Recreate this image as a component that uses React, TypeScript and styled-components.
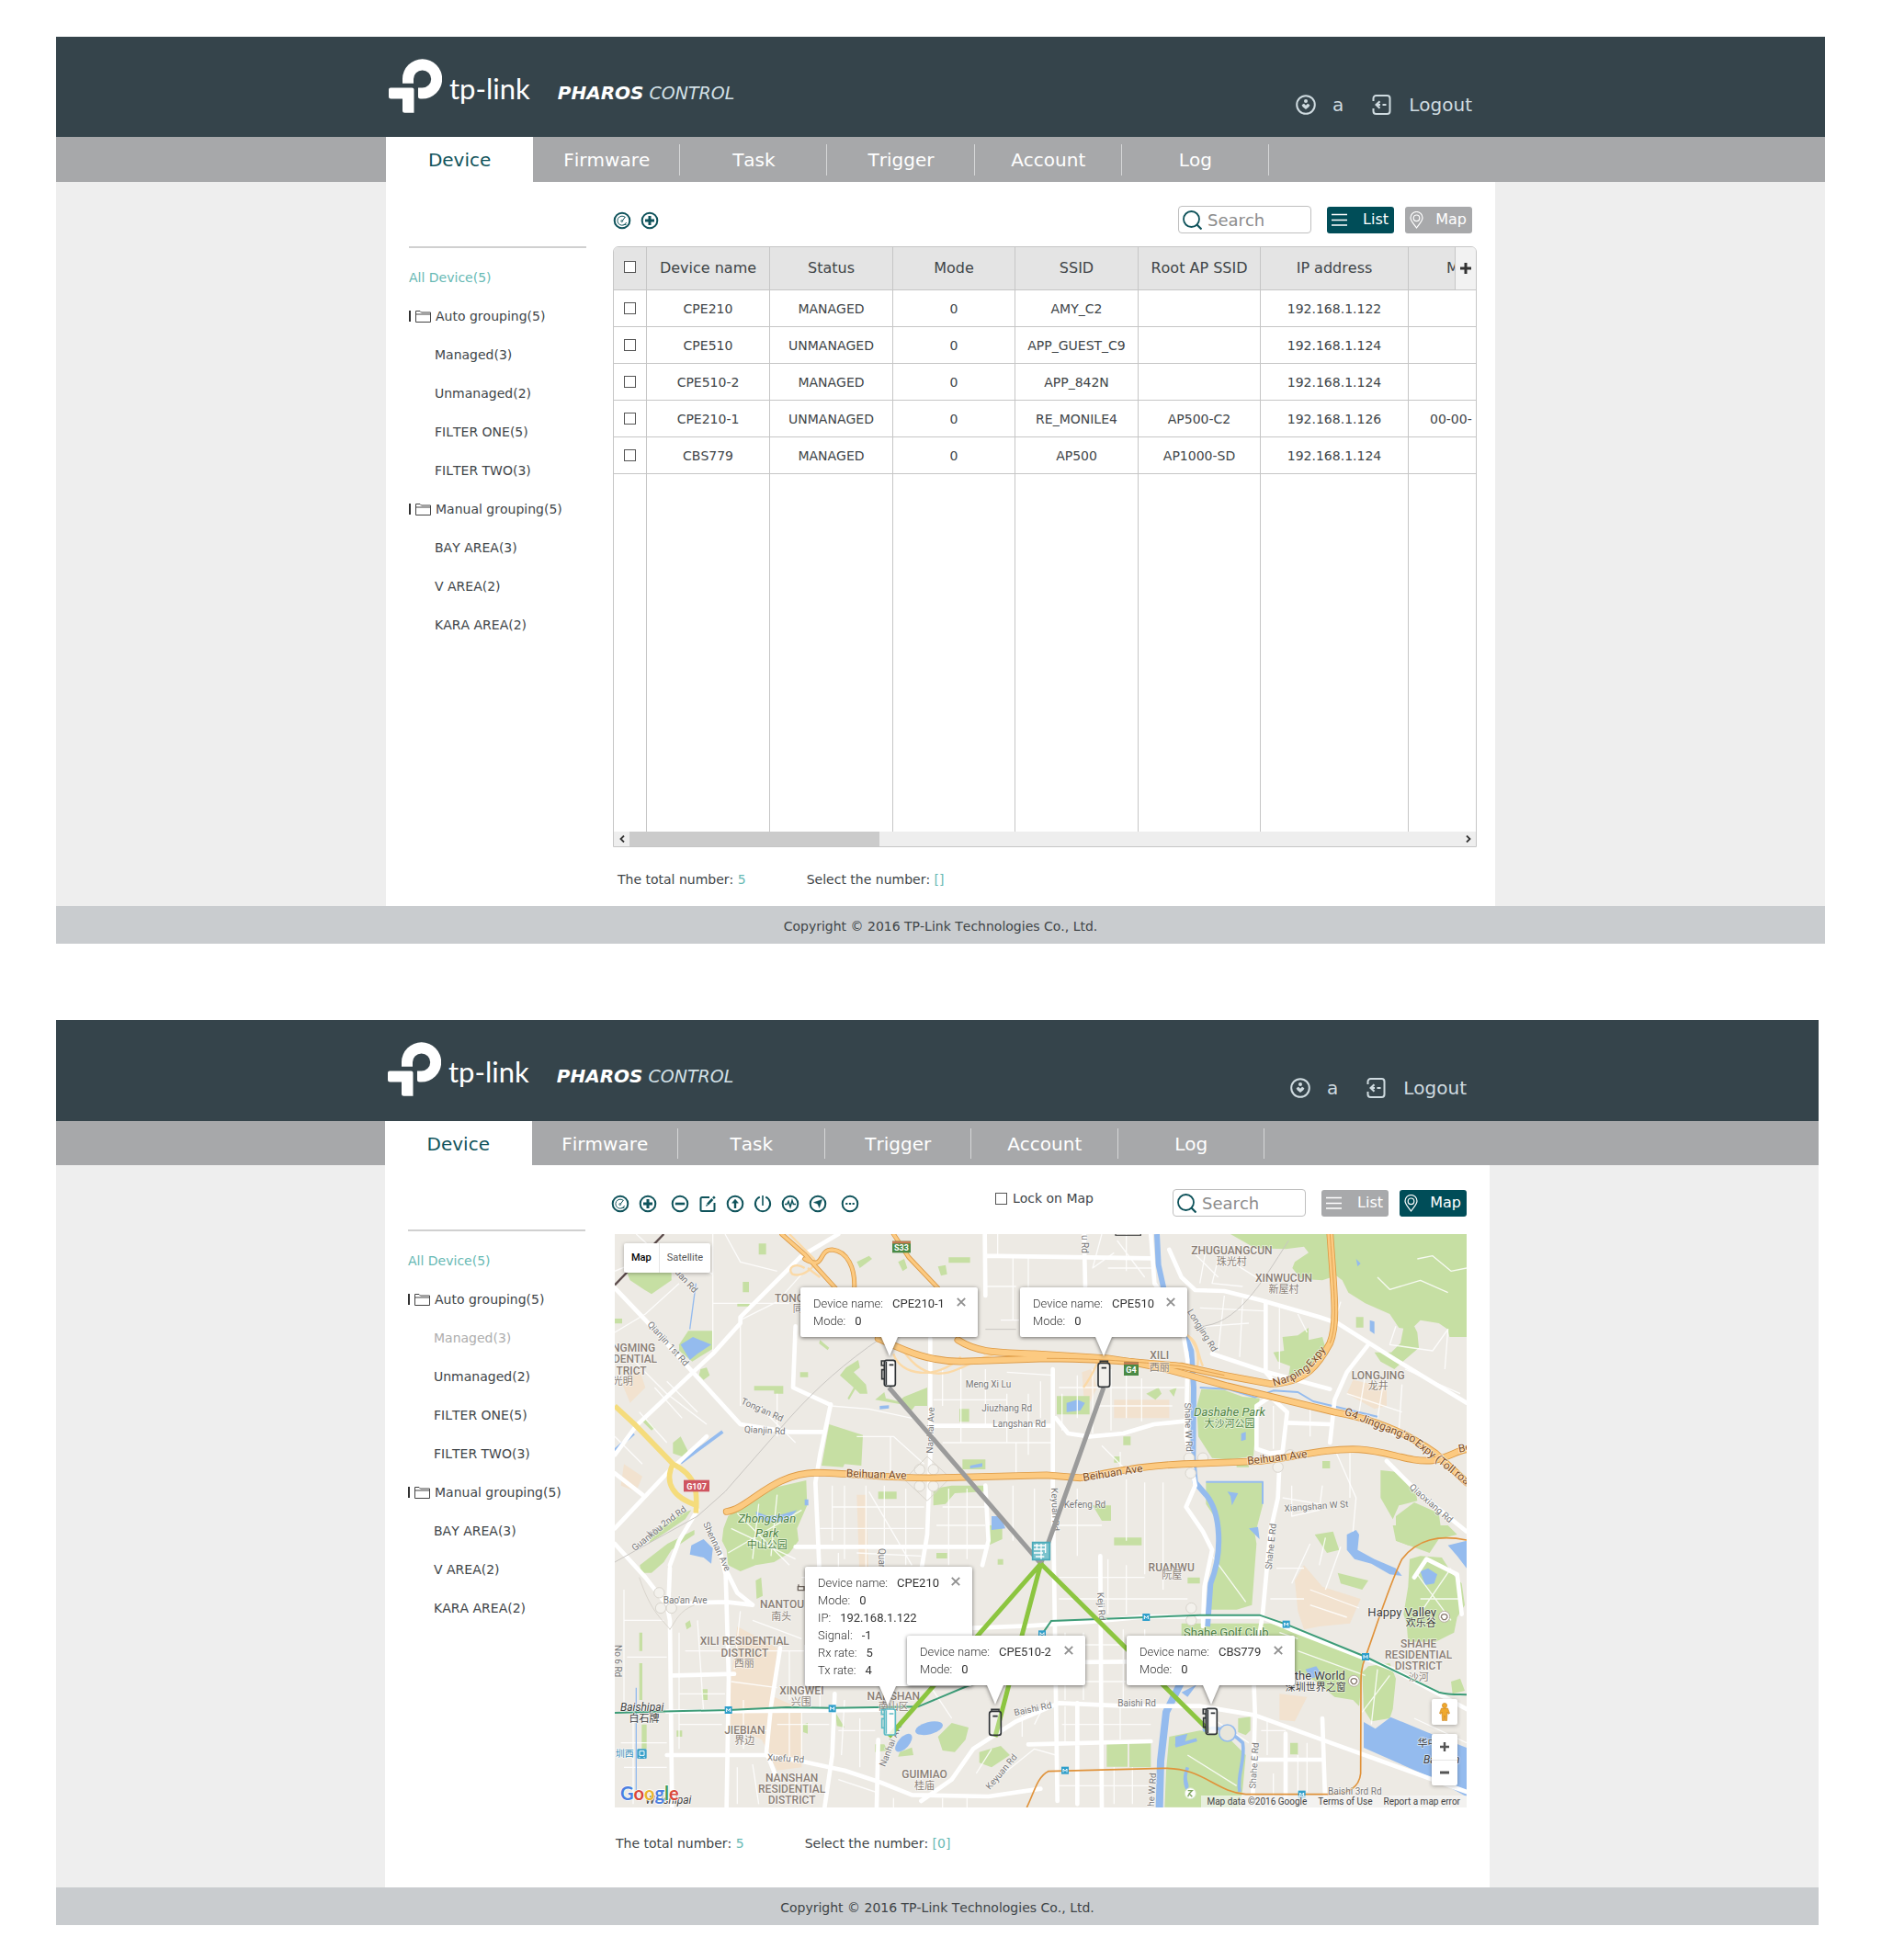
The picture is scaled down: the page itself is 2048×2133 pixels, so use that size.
import React from "react";
import styled, { createGlobalStyle, css } from "styled-components";

const GlobalStyle = createGlobalStyle`
  *, *::before, *::after { box-sizing: border-box; }
  body {
    margin: 0;
    background: #fff;
    color: #404548;
    font: 14px/20px "DejaVu Sans", Verdana, sans-serif;
    font-kerning: none;
  }
  a { color: inherit; text-decoration: none; }
  button, input { font: inherit; color: inherit; }
  button { padding: 0; border: 0; background: none; cursor: pointer; }
`;

const TEAL = "#0f535b";
const LINE = "#c6c6c6";

/* ---------- page frame ---------- */

const Page = styled.main`
  display: flex;
  flex-direction: column;
  gap: 83px;
  padding: 40px 62px 38px 61px;
`;

const Screen = styled.section<{ $inset?: number }>`
  margin-right: ${(p) => p.$inset ?? 0}px;
  background: #eeeeee;
`;

const Column = styled.div<{ $max: number }>`
  width: 100%;
  max-width: ${(p) => p.$max}px;
  margin: 0 auto;
`;

const Header = styled.header<{ $height: number }>`
  height: ${(p) => p.$height}px;
  background: #35444b;
`;

const HeaderRow = styled(Column)`
  display: flex;
  justify-content: space-between;
  padding: 24px 25px 0 3px;
`;

const Brand = styled.a`
  display: flex;
  align-items: flex-start;
  color: #fff;
`;

const BrandName = styled.span`
  margin: 16px 0 0 8px;
  font: 31px/32px Lato, sans-serif;
`;

const Product = styled.span`
  display: flex;
  gap: 6px;
  margin: 25px 0 0 30px;
  font-size: 19px;
  line-height: 24px;
  font-style: italic;
  font-weight: 200;
  color: #d3e1e7;

  strong {
    font-size: 20px;
    font-weight: 700;
    color: #fff;
  }
`;

const Session = styled.div`
  display: flex;
  align-items: center;
  height: 24px;
  margin-top: 38px;
  font-size: 20px;
  color: #cfdbe0;

  svg { flex: none; }
  span { margin: 0 31px 0 18px; }
  a { display: flex; align-items: center; gap: 19px; }
`;

const NavBar = styled.nav<{ $height: number }>`
  background: #a7a8aa;

  ${Column} {
    display: flex;
    height: ${(p) => p.$height}px;
  }
`;

const Tab = styled.a<{ $active?: boolean }>`
  position: relative;
  display: flex;
  align-items: center;
  justify-content: center;
  width: 13.27%;
  padding-top: 1px;
  font-size: 20px;
  color: #fff;

  ${(p) =>
    p.$active
      ? css`
          background: #fff;
          color: ${TEAL};
        `
      : css`
          &::after {
            content: "";
            position: absolute;
            right: 0;
            top: 8px;
            bottom: 7px;
            border-right: 1px solid #d6d7d8;
          }
        `}
`;

const Body = styled(Column)<{ $gap: number; $right: number; $bottom: number }>`
  display: grid;
  grid-template-columns: 193px minmax(0, 1fr);
  column-gap: ${(p) => p.$gap}px;
  padding: 26px ${(p) => p.$right}px ${(p) => p.$bottom}px 25px;
  background: #fff;
`;

const Footer = styled.footer`
  height: 41px;
  line-height: 44px;
  text-align: center;
  background: #c9cccf;
`;

/* ---------- sidebar ---------- */

const Sidebar = styled.aside`
  margin-top: 44px;
  padding-top: 11px;
  border-top: 2px solid #d0d0d0;
  line-height: 42px;

  ul { margin: 0; padding: 0; list-style: none; }
  li li { padding-left: 28px; }
`;

const AllLink = styled.a`
  display: block;
  color: #67b9b4;
`;

const GroupLink = styled.a`
  display: flex;
  align-items: center;
  gap: 5px;

  &::before {
    content: "";
    width: 2px;
    height: 12px;
    background: #333;
  }
`;

const GroupItem = styled.a<{ $muted?: boolean }>`
  color: ${(p) => (p.$muted ? "#adadad" : "inherit")};
`;

/* ---------- toolbar ---------- */

const Toolbar = styled.div<{ $right?: number; $gap: number }>`
  display: flex;
  align-items: center;
  gap: 15px;
  height: 30px;
  padding-right: ${(p) => p.$right ?? 0}px;
  margin-bottom: ${(p) => p.$gap}px;
`;

const IconGroup = styled.div`
  display: flex;
  gap: 10px;
`;

const IconButton = styled.button`
  width: 20px;
  height: 20px;
  margin: 2px 0 0;

  svg { display: block; }
`;

const ToolEnd = styled.div`
  display: flex;
  align-items: center;
  gap: 12px;
  margin-left: auto;
`;

const Check = styled.input.attrs({ type: "checkbox" })`
  appearance: none;
  display: block;
  flex: none;
  width: 13px;
  height: 13px;
  margin: 0;
  border: 1px solid #555;
  background: #fff;

  &:checked { background: ${TEAL}; }
`;

const LockLabel = styled.label`
  display: flex;
  align-items: center;
  gap: 6px;
  margin: 0 74px 10px 0;
`;

const SearchBox = styled.label`
  display: flex;
  align-items: center;
  gap: 6px;
  width: 145px;
  height: 30px;
  margin-right: 5px;
  padding-left: 4px;
  border: 1px solid #bfbfbf;
  border-radius: 4px;
  background: #fff;

  svg { flex: none; }
  input {
    min-width: 0;
    flex: 1;
    padding: 2px 0 0;
    border: 0;
    outline: 0;
    background: none;
    font-size: 18px;
  }
  input::placeholder { color: #8c8c8c; opacity: 1; }
`;

const ViewButton = styled.button<{ $active?: boolean }>`
  display: flex;
  align-items: center;
  justify-content: space-between;
  width: 73px;
  height: 29px;
  padding: 0 6px 0 5px;
  border-radius: 3px;
  font-size: 16px;
  color: #fff;
  background: ${(p) => (p.$active ? "#004d58" : "#a8a9ab")};
`;

const Status = styled.p<{ $top: number }>`
  display: flex;
  gap: 66px;
  margin: ${(p) => p.$top}px 0 0;
  padding-left: 5px;

  b { font-weight: 400; color: #67b9b4; }
`;

/* ---------- device table ---------- */

const TableFrame = styled.div`
  position: relative;
  border: 1px solid ${LINE};
  border-radius: 6px 6px 0 0;
  overflow: hidden;
`;

const DeviceTable = styled.table`
  table-layout: fixed;
  width: 1043px;
  border-spacing: 0;
  text-align: center;

  th, td {
    padding: 0;
    border-right: 1px solid ${LINE};
    border-bottom: 1px solid ${LINE};
    white-space: nowrap;
  }
  th {
    height: 47px;
    font-size: 16px;
    font-weight: 400;
    background: #e4e4e4;
  }
  td { height: 40px; }
  th:last-child { padding-left: 41px; text-align: left; }
  td:last-child { padding-left: 23px; text-align: left; }
  ${Check} { margin: 0 auto; }
  th ${Check} { margin-bottom: 4px; }
`;

const FillerRow = styled.tr`
  td { height: 389px; border-bottom: 0; }
`;

const AddColumn = styled.button`
  position: absolute;
  top: 0;
  right: 0;
  width: 23px;
  height: 47px;
  border-left: 1px solid ${LINE};
  border-bottom: 1px solid ${LINE};
  background: #f2f2f2;

  svg { display: block; margin: auto; }
`;

const ScrollBar = styled.div`
  display: flex;
  align-items: stretch;
  height: 16px;
  background: #eeeeee;

  button { display: grid; place-items: center; width: 17px; }
`;

const ScrollThumb = styled.div`
  width: 29%;
  margin-right: auto;
  background: #cbcbcb;
`;

/* ---------- map ---------- */

const MapFrame = styled.div`
  position: relative;
  height: 624px;
  margin-left: 4px;
  overflow: hidden;
  font-family: Roboto, sans-serif;
  font-kerning: auto;

  > svg { display: block; width: 100%; height: 100%; }
`;

const MapCard = styled.div`
  position: absolute;
  background: #fff;
  border-radius: 2px;
  box-shadow: 0 1px 4px rgba(0, 0, 0, 0.3);
`;

const MapTypes = styled(MapCard)`
  left: 10px;
  top: 10px;
  display: flex;
  height: 32px;
  font-size: 11px;

  button { padding: 0 8px; color: #565656; }
  button:first-child {
    border-right: 1px solid #e6e6e6;
    font-weight: 500;
    color: #000;
  }
`;

const Pegman = styled(MapCard).attrs({ as: "button" })`
  right: 10px;
  top: 506px;
  width: 28px;
  height: 28px;

  svg { display: block; margin: auto; }
`;

const ZoomControl = styled(MapCard)`
  right: 10px;
  top: 544px;
  display: flex;
  flex-direction: column;
  width: 28px;
  height: 56px;

  button { flex: 1; display: grid; place-items: center; }
  button + button { border-top: 1px solid #e6e6e6; }
`;

const Attribution = styled.div`
  position: absolute;
  right: 0;
  bottom: 0;
  display: flex;
  gap: 12px;
  padding: 0 7px 0 6px;
  font-size: 10px;
  line-height: 13px;
  color: #444;
  background: rgba(245, 245, 245, 0.7);
`;

const Bubble = styled.div<{ $x: number; $y: number; $w: number; $tip: number }>`
  position: absolute;
  left: ${(p) => p.$x}px;
  top: ${(p) => p.$y}px;
  width: ${(p) => p.$w}px;
  padding: 8px 14px;
  border-radius: 2px;
  background: #fff;
  filter: drop-shadow(0 1px 2px rgba(0, 0, 0, 0.55));
  font-size: 13px;
  line-height: 19px;
  font-weight: 300;
  color: #333;

  &::after {
    content: "";
    position: absolute;
    left: ${(p) => p.$tip - 9}px;
    top: 100%;
    border: 9px solid transparent;
    border-top: 21px solid #fff;
    border-bottom: 0;
  }

  dl { margin: 0; }
  dl div { display: flex; gap: 10px; }
  dd { margin: 0; font-weight: 400; }
`;

const CloseButton = styled.button`
  position: absolute;
  top: 11px;
  right: 13px;
  width: 10px;
  height: 10px;

  svg { display: block; }
`;

/* ---------- icons ---------- */

const Ring = ({ children }: { children: React.ReactNode }) => (
  <svg width="20" height="20" viewBox="0 0 20 20" fill="none" stroke={TEAL} strokeWidth="2">
    <circle cx="10" cy="10" r="8.3" />
    {children}
  </svg>
);

const tools: Record<string, React.ReactNode> = {
  Scan: (
    <Ring>
      <path d="M13 6.2A5 5 0 1 0 14.6 12M10 10.500l3.600-4.600M11.500 14.400h3" strokeWidth="1" />
      <circle cx="9.700" cy="10.600" r="1" strokeWidth=".8" />
    </Ring>
  ),
  Add: <Ring><path d="M10 5v10M5 10h10" strokeWidth="3" /></Ring>,
  Remove: <Ring><path d="M4.800 10h10.400" strokeWidth="2.600" /></Ring>,
  Edit: (
    <svg width="20" height="20" viewBox="0 0 20 20" fill="none" stroke={TEAL} strokeWidth="2">
      <path d="M12 3H4a1.500 1.500 0 0 0-1.500 1.500v12A1.500 1.500 0 0 0 4 18h12a1.500 1.500 0 0 0 1.500-1.500V9" />
      <path d="M10 10.600 15.300 5" strokeWidth="2.600" />
      <path d="m16 4.200 1.800-1.800" strokeWidth="2.600" />
      <path d="m8.400 12.400.8-1.600 1 1z" fill={TEAL} strokeWidth=".6" />
    </svg>
  ),
  Upgrade: <Ring><path d="M10 15V9" strokeWidth="2.400" /><path d="m10 5 3.500 4.200h-7z" fill={TEAL} strokeWidth=".4" /></Ring>,
  Reboot: (
    <svg width="20" height="20" viewBox="0 0 20 20" fill="none" stroke={TEAL} strokeWidth="2">
      <path d="M6.800 2.600a8.100 8.100 0 1 0 6.400 0" />
      <path d="M10 1v11" strokeWidth="1.600" />
    </svg>
  ),
  Monitor: <Ring><path d="M4 10.500h2.500l1.500-3 2 6 2-7 1.400 4H16" strokeWidth="1.500" /></Ring>,
  Locate: <Ring><path d="m14.600 5.400-3 9.200-1.800-4.400-4.400-1.600z" fill={TEAL} strokeWidth=".4" /></Ring>,
  More: (
    <Ring>
      <path d="M5.200 10h2.200M8.900 10h2.200M12.600 10h2.200" strokeWidth="2.200" />
    </Ring>
  ),
};

const LogoMark = () => (
  <svg width="58" height="59" viewBox="0 0 58 59" fill="#fff">
    <path d="M15 26.700V21.700A21.600 21.600 0 1 1 36.500 43.500H34.500a2.500 2.500 0 0 1-2.500-2.500V31.600H36.500A9.600 9.600 0 1 0 27 22V26.700Z" />
    <path d="M2 31.400H25.500a2 2 0 0 1 2 2V58.700H17.500a2.500 2.500 0 0 1-2.500-2.500V43.500H2.500a2.500 2.500 0 0 1-2.500-2.500V33.400a2 2 0 0 1 2-2Z" />
  </svg>
);

const UserIcon = () => (
  <svg width="22" height="22" viewBox="0 0 22 22" fill="#cfdbe0">
    <circle cx="11" cy="11" r="9.800" fill="none" stroke="#cfdbe0" strokeWidth="2" />
    <circle cx="11" cy="7" r="2" />
    <path d="M6.600 11.200 9 9.800l2 2 2-2 2.400 1.400-1 2L11 16l-3.400-2.800z" />
  </svg>
);

const LogoutIcon = () => (
  <svg width="21" height="22" viewBox="0 0 21 22" fill="none" stroke="#cfdbe0" strokeWidth="2">
    <path d="M1.500 7V4a3 3 0 0 1 3-3h12a3 3 0 0 1 3 3v14a3 3 0 0 1-3 3h-12a3 3 0 0 1-3-3v-3" />
    <path d="M8.500 7.200 4.600 11l3.900 3.800M5 11h4M11.500 11h4" strokeWidth="2.200" />
  </svg>
);

const FolderIcon = () => (
  <svg width="17" height="14" viewBox="0 0 17 14" fill="none" stroke="#444" strokeWidth="1">
    <path d="M.500 13.500V1.500h4.500l1.500 1.500h10v10.500zM.500 5h16" />
  </svg>
);

const SearchIcon = () => (
  <svg width="21" height="21" viewBox="0 0 21 21" fill="none" stroke={TEAL} strokeWidth="1.800">
    <circle cx="9.500" cy="9.500" r="8.500" />
    <path d="m15.500 15.500 5 5" strokeWidth="2.200" />
  </svg>
);

const ListIcon = () => (
  <svg width="17" height="14" viewBox="0 0 17 14" stroke="#fff" strokeWidth="1.500">
    <path d="M0 1.500h17M0 7.500h17M0 13h17" />
  </svg>
);

const PinIcon = () => (
  <svg width="15" height="19" viewBox="0 0 15 19" fill="none" stroke="#fff" strokeWidth="1.200">
    <path d="M7.500 18C4 13 1 10.500 1 7a6.500 6.500 0 0 1 13 0c0 3.500-3 6-6.500 11Z" />
    <circle cx="7.500" cy="7.300" r="3.300" />
  </svg>
);

/* ---------- shared parts ---------- */

const TABS = ["Device", "Firmware", "Task", "Trigger", "Account", "Log"];

function ScreenTop({ max, head, nav }: { max: number; head: number; nav: number }) {
  return (
    <>
      <Header $height={head}>
        <HeaderRow $max={max}>
          <Brand href="#" aria-label="tp-link Pharos Control">
            <LogoMark />
            <BrandName>tp-link</BrandName>
            <Product>
              <strong>PHAROS</strong> CONTROL
            </Product>
          </Brand>
          <Session>
            <UserIcon />
            <span>a</span>
            <a href="#logout">
              <LogoutIcon />
              Logout
            </a>
          </Session>
        </HeaderRow>
      </Header>
      <NavBar $height={nav}>
        <Column $max={max}>
          {TABS.map((t, i) => (
            <Tab key={t} href={`#${t.toLowerCase()}`} $active={i === 0}>
              {t}
            </Tab>
          ))}
        </Column>
      </NavBar>
    </>
  );
}

const GROUPS = [
  { name: "Auto grouping(5)", items: ["Managed(3)", "Unmanaged(2)", "FILTER ONE(5)", "FILTER TWO(3)"] },
  { name: "Manual grouping(5)", items: ["BAY AREA(3)", "V AREA(2)", "KARA AREA(2)"] },
];

function Groups({ muted }: { muted?: string }) {
  return (
    <Sidebar>
      <AllLink href="#all">All Device(5)</AllLink>
      <ul>
        {GROUPS.map((g) => (
          <li key={g.name}>
            <GroupLink href="#group">
              <FolderIcon />
              {g.name}
            </GroupLink>
            <ul>
              {g.items.map((item) => (
                <li key={item}>
                  <GroupItem href="#item" $muted={item === muted}>
                    {item}
                  </GroupItem>
                </li>
              ))}
            </ul>
          </li>
        ))}
      </ul>
    </Sidebar>
  );
}

function Tools({ names }: { names: string[] }) {
  return (
    <IconGroup>
      {names.map((n) => (
        <IconButton key={n} type="button" aria-label={n}>
          {tools[n]}
        </IconButton>
      ))}
    </IconGroup>
  );
}

function ViewSwitch({ view }: { view: "list" | "map" }) {
  return (
    <>
      <SearchBox>
        <SearchIcon />
        <input type="text" placeholder="Search" aria-label="Search" />
      </SearchBox>
      <ViewButton type="button" $active={view === "list"}>
        <ListIcon />
        List
      </ViewButton>
      <ViewButton type="button" $active={view === "map"}>
        <PinIcon />
        Map
      </ViewButton>
    </>
  );
}

/* ---------- list screen ---------- */

const COLUMNS: [string, number][] = [
  ["Device name", 134],
  ["Status", 134],
  ["Mode", 133],
  ["SSID", 134],
  ["Root AP SSID", 133],
  ["IP address", 161],
  ["MAC", 178],
];

const DEVICES = [
  ["CPE210", "MANAGED", "0", "AMY_C2", "", "192.168.1.122", ""],
  ["CPE510", "UNMANAGED", "0", "APP_GUEST_C9", "", "192.168.1.124", ""],
  ["CPE510-2", "MANAGED", "0", "APP_842N", "", "192.168.1.124", ""],
  ["CPE210-1", "UNMANAGED", "0", "RE_MONILE4", "AP500-C2", "192.168.1.126", "00-00-"],
  ["CBS779", "MANAGED", "0", "AP500", "AP1000-SD", "192.168.1.124", ""],
];

function DeviceList() {
  return (
    <TableFrame>
      <DeviceTable>
        <colgroup>
          <col style={{ width: 36 }} />
          {COLUMNS.map(([name, w]) => (
            <col key={name} style={{ width: w }} />
          ))}
        </colgroup>
        <thead>
          <tr>
            <th>
              <Check aria-label="Select all devices" />
            </th>
            {COLUMNS.map(([name]) => (
              <th key={name}>{name}</th>
            ))}
          </tr>
        </thead>
        <tbody>
          {DEVICES.map((row) => (
            <tr key={row[0]}>
              <td>
                <Check aria-label={`Select ${row[0]}`} />
              </td>
              {row.map((cell, i) => (
                <td key={i}>{cell}</td>
              ))}
            </tr>
          ))}
          <FillerRow aria-hidden="true">
            <td />
            {COLUMNS.map(([name]) => (
              <td key={name} />
            ))}
          </FillerRow>
        </tbody>
      </DeviceTable>
      <AddColumn type="button" aria-label="Add column">
        <svg width="12" height="12" viewBox="0 0 12 12" stroke="#333" strokeWidth="3">
          <path d="M6 0v12M0 6h12" />
        </svg>
      </AddColumn>
      <ScrollBar>
        <button type="button" aria-label="Scroll left">
          <svg width="6" height="8" viewBox="0 0 6 8" fill="none" stroke="#333" strokeWidth="1.800">
            <path d="M5 .500 1.500 4 5 7.500" />
          </svg>
        </button>
        <ScrollThumb />
        <button type="button" aria-label="Scroll right">
          <svg width="6" height="8" viewBox="0 0 6 8" fill="none" stroke="#333" strokeWidth="1.800">
            <path d="M1 .500 4.500 4 1 7.500" />
          </svg>
        </button>
      </ScrollBar>
    </TableFrame>
  );
}

/* ---------- map drawing (3 units to the pixel) ---------- */

const PARKS = [
  "M2040 39l80 46 100 3 60-8 15 20-45 30-8 20 28 35 70 5 45-15 20 15 20 40 55 35 80 35 30 45 40 5 30-30 60 10 30 20 5 25h57V39z",
  "M70 165h145v25l-65 45-25-15-45-30z",
  "M785 475l40-25 5 25-20 15 40 40 5 30h-25l-15-15-20 35-5-5 20-35-45-40z",
  "M485 535h95v25h-30v-10h-65zM880 580l30-25 5 20 40 10 20-15 75-30v60h-40l-15 20-30-25z",
  "M730 660l110 35-5 100-55-5-5 10-70-5z",
  "M380 1040l5-40 15-40 70-45 90-50 95-22 3 82-33 75 5 40-30 40-50 30-60 10-50 20-40-20-5-50z",
  "M112 1120l90-70 88-45v15l-75 50-25 40-40 35h-35zM160 1010l90-60 30-10-20 30-60 40-60 40z",
  "M240 400l30-45h78v60l-65 40-43-35z",
  "M1473 568h107v60h-107z",
  "M1945 545l75 3 60 22 55 5-15 125-5 65-85 10-50-5-45-70-5-100z",
  "M2180 425l35-5-5-45 50-5 35-25v40l45-10 10 35-40 50-25 20-35 30-20-10 5-30-40-15z",
  "M2650 360l5 50-35 30-45 40-45-25-20-30h55l30-30 10-50 35-5z",
  "M2530 810l50 5 65 65 5 30-60 15-20 45-40-70zM2580 960l60-45 80 35 10 70-40 60-110-40z",
  "M1960 850h185v75l-25 95 5 30-15 200-50 15h-95l10-75 25-100v-110l-40-60z",
  "M1880 1310h290l70 20 235 100-15 150-20-20-60-10-60-50-60-30-380-90z",
  "M2490 1450l70-10 20 50-10 100-10 30-60 10-25-40-5-120z",
  "M2625 1100l35-10 70 5 35 55 30 30 10 70-25 40-10 50-60 30h-90l-5-60-10-30 15-90z",
  "M2570 990h180l30 30-60 15-50 15-50 5-40-15zM2390 1145l60 15 40 10-20 30-70-20zM2760 1500l30-10 15 40-40 10z",
  "M1840 1680l100-20 80 10 70 70-10 110-10 60h-245l5-120z",
  "M1636 1702h68v76h-68zM1710 1700h70v80h-70zM2065 1620l40-5v45l-15 15-25-10zM2235 1700h25v38h-25z",
  "M1130 1635l55 15-10 40-35 40-40-5-15-45zM1220 1730l70-20 30 30-60 40-40-15zM880 1705h30l10 20-40 5z",
  "M1070 870l60-10h105v20l-95 5-30 35-40 5zM1165 775h75v32h-75zM1155 610h32v42h-32zM890 880h60v24h-60z",
  "M1590 925h60v50h-30zM1660 1030h90v25h-90zM1120 115h70v18h-70zM1085 145l25-5 5 30-20 5zM820 130l40-20 10 10-40 30z",
  "M500 70h24v36h-24zM448 195h20v34h-20zM310 480l20-5 10 25-20 15-15-15zM635 490h26v16h-26zM700 385l30 25-5 8-28-22z",
  "M220 720l25-20 25 50-5 20-45-15zM120 650l10-8 30 30-10 8zM30 315h24v16h-24zM430 265h40v10h-40zM955 130l20-10 10 30-15 10z",
  "M1765 560l40-20 10 20-20 20zM1840 550l25-10-10 30zM1690 700h24v28h-24zM1660 765h20v20h-20zM2315 1020l60-10 20 60-40 10z",
  "M490 1170l18-10 5 60-20 10zM260 1310l15-10 5 20-15 10zM315 1525h18v35h-18zM232 1660h18v20h-18zM645 1640l15-5v35l-15-5zM750 1600l30 50-25-5z",
  "M1080 1080h35v18h-35zM1280 1100h18v18h-18zM1245 990h50v45l-45 20zM2060 780h40v20h-40zM2340 780h25v24h-25zM2450 310h24v34h-24z",
  "M110 1340h10v60h-10zM110 1440h10v120h-10zM118 1640h16v80h-16zM960 1730l40-15 5 25-50 5zM1900 1160h40v20h-40z",
];

const BUILT = [
  "M2440 515l110 25v60l-40 10-90-50z",
  "M2280 1120l60 70 125 40-35 80-100 10-50 10-20-60-10-100zM2200 1540l90 10-40 80-50-5z",
  "M430 1320l130 70-10 160 90 40v190l-80 10-50-100-110-50 10-160z",
  "M90 90l150 30-60 60-80-20zM55 530l55-50 20 60-50 50zM820 890h30l10 300h-30zM1555 490l30-10 20 60-40 80z",
  "M60 790l60 40-20 50-50-20zM1660 580h180v60h-180z",
];

const WATER = [
  "M285 375l60 25-45 30-25 20-30-50z",
  "M280 1055l40-20 30 30-5 50-25-20-45-10z",
  "M2420 1020l30-15 10 15-5 50 55 30 70 30 20 25-40-5-60-35-55-15-25-30z",
  "M2660 1140l25-10 30 20-10 30-30 5zM2750 1055l61-15v90l-31-40z",
  "M2475 1632l38 22 50-38 120 50 128 50v160l-110-60-226-100z",
  "M1505 590l35-10 25 10-15 25-45 5zM2495 320l15 5v40l-15-10zM2450 120l15 15-10 10z",
  "M2030 880l35 5-20 40-5-30zM2100 1000l30-5 5 40zM1860 1680l40-10-10 30-30 10zM1890 1785l15 60-15-20zM1260 960l30 0 15 40-45 5z",
  "M490 945l40 15 45-5 50-15-30 35-60 5-40-15zM650 905h12v20h-12z",
  "M1880 1535l50-25-30 40zM2285 1460l35-10 20 30-40 10zM2075 690l15-5v25l-15 5z",
  "M895 600l30-2v10l-30 3zM1190 795l40-8v12l-40 5z",
];

const MAJOR = [
  "M30 215L130 320 285 490 440 660 600 685H710",
  "M30 760L100 665 285 490 350 430 440 330V310L640 110 760 39",
  "M30 1000L200 820 330 700M30 820L120 890",
  "M735 595L700 760 685 850 692 1000 698 1140",
  "M620 340L612 540 735 597",
  "M1060 380V760L1050 1020 1030 1140",
  "M1238 39L1240 240M1240 110L1380 112 1780 118M1070 665H1460",
  "M1562 39L1566 210M1780 39L1792 200 1880 330 1900 450 1895 700 1925 860 1895 930 1950 1010 1980 1070 1955 1190 1950 1320",
  "M1840 90L1880 180 1925 222 2020 225 2140 255 2330 310 2390 330 2580 450 2811 590",
  "M2155 260V490L2190 530M1980 430L2160 490 2365 545M2490 400L2420 490 2380 580 2365 720M2225 655L2365 660",
  "M2170 570L2125 600V740L2170 755 2210 750 2225 620Z",
  "M2550 780L2650 880 2811 1010M2200 790L2195 900 2170 1010 2145 1280 2115 1470 2120 1600 2112 1911",
  "M1460 480V860L1475 1890M1470 640L1510 690 1580 700 1690 690 1790 660 1890 650",
  "M1615 1090L1620 1911M1240 860L1250 1040 1230 1120",
  "M1030 1890L1130 1820 1200 1720 1340 1630 1480 1570 1700 1580 1940 1580 2120 1610 2340 1690 2811 1860",
  "M1380 1705L1780 1695M1540 1570V1900M2220 1670V1900M2340 1620L2350 1911M2120 1755H2340",
  "M1200 1325L1380 1318 1580 1305 1760 1288 2140 1288 2250 1335 2570 1460 2811 1590M1200 1440L1700 1435",
  "M30 1050L130 1160 200 1250 210 1300 217 1911M210 1130L205 1250M300 940L240 1040 210 1120",
  "M330 990L375 1080 392 1150 395 1250 402 1490 395 1911M390 1130L430 1210 480 1250M230 1245L395 1240 480 1250",
  "M200 1740L520 1740 640 1760 780 1790 900 1830 1000 1870 1250 1875 1420 1850",
  "M570 1390L540 1580 525 1730 560 1820M748 1540L740 1740 715 1911M220 1480L420 1475M890 1690L885 1911M200 1598L740 1594 900 1592",
  "M620 1060H1240M2640 1160L2680 1100 2780 1150 2795 1280",
];

const MINOR = [
  "M350 39V420M30 160L200 90 350 170M350 265H600M100 39L200 130 300 160M390 39L440 130 560 160M640 170L560 260 440 320V600",
  "M30 360L130 300 240 200M60 420L200 560 330 660M160 540L250 640M200 520L300 620M110 620L200 720M30 700L120 790M820 700L940 700 1040 790",
  "M560 560V700M500 600L620 720M735 600L860 610 1000 640M930 700V830M1100 480V600M1160 480V720M1240 480V660M1310 560V720M1070 580H1310M1100 720H1460",
  "M1310 490L1460 500M1340 720V830M1380 560V760M1420 520V640M1280 39V110M1330 110V320M1380 110V330M1240 210H1340M1290 320H1350",
  "M740 860V1040M780 860V1100M850 860V1150M910 860V1120M980 870V1120M740 930H1040M700 1000H1040M860 880L1000 1120M1100 930H1250M1120 870V1120M1180 870V1100M1080 990H1240",
  "M1330 860V1040M1400 870V1080M1540 870V1090M1480 930H1590M1480 990H1620M1700 840V1040M1760 850V1150M1820 850V1200M1480 1160H1760M1640 1100V1280M1700 1120V1280M1480 1230H1900",
  "M1500 1340V1560M1560 1340V1560M1690 1330V1560M1760 1330V1420M1480 1500H1700M1480 1380H1700M1490 1640H1780M1500 1580V1700M1680 1580V1690M1480 1840H1780M1720 1780V1900M1660 1780V1900",
  "M1490 560V680M1540 500V640M1590 480V690M1650 480V680M1700 500V640M1750 510V650M1480 540H1890M1600 600H1850M1680 750V810M1620 730L1700 810",
  "M1620 39L1590 150 1660 100M1670 60L1760 180M1700 39V160M1640 150H1790M1920 100L2000 180M1960 90L1940 200M2000 120L1980 200 2080 210M2060 140L2140 190",
  "M1940 280L2150 290M1960 340L2100 330M2020 240L2000 420M2080 250L2070 440M2200 280V480M2260 300L2290 360M2400 260L2360 390M2180 600V740M2300 600V700M2380 740L2450 900 2440 1010",
  "M2580 340L2560 400 2700 420 2750 350 2740 480M2610 480L2700 520 2790 560M2420 560L2600 620M2440 620L2580 700M2480 500L2460 620M2540 520L2520 640M2600 530L2590 680",
  "M2240 860V960L2330 940 2340 860M2210 900L2330 920M2430 740V900M2300 1050L2240 1180M2350 1030L2330 1120M2190 1130H2280M2170 1230H2280M2400 1060L2350 1200",
  "M240 1340V1720M300 1300L320 1600M260 1400H390M240 1540H390M240 1640H380M60 1200V1580M60 1300H190M70 1420H200M50 1700H200M60 1780H200M90 1620V1900",
  "M440 1270L420 1460M480 1300L640 1360M440 1400H700M410 1500L560 1520M450 1560V1720M600 1400V1560M650 1380V1580M700 1360V1600M560 1640H730M600 1600V1760M640 1600V1760M410 1660H530",
  "M780 1560L770 1740M830 1620V1780M760 1660H880M430 1780V1900M480 1770L500 1900M760 1820L880 1860M620 1800V1900M670 1800V1900M940 1880V1911M1050 1500L1130 1620M1100 1880V1911",
  "M1180 1880V1911M1300 1800L1400 1720 1470 1740M1210 1800L1260 1720M1360 1600V1680M1400 1640L1440 1560M1980 1620L2100 1700M2140 1660H2220M2160 1620V1740M2180 1800V1880M2260 1740V1860M2290 1700V1860",
  "M2300 1200L2460 1260M2300 1250L2420 1290M2200 1340L2260 1360M2260 1400L2480 1480M2520 1460L2500 1640M2560 1480L2470 1600M2650 1150L2760 1300M2760 1130L2650 1290M2660 1230H2790M1980 1090L2090 1240M2520 180L2560 220 2660 190 2750 230M2650 120L2700 110 2760 160 2811 150",
  "M410 1000L620 1100M430 950L600 1120M500 920L480 1100M560 890L540 1090M400 1080L640 940M1900 1740L2060 1840M2640 1620L2811 1700M880 1180V1130M760 1080V1180M820 1080L1030 1090M640 1160H860",
];

const HIGHWAYS = [
  "M395 945C470 935 540 820 690 818C800 820 950 838 1080 835L1440 826 1550 835C1680 812 1760 792 1940 788L2140 780C2260 765 2350 738 2460 742C2560 748 2620 785 2700 778C2750 770 2780 745 2811 742",
  "M890 380C960 410 1040 455 1160 455L1440 445C1640 445 1760 460 1880 470L2020 500 2170 528C2290 525 2330 460 2365 395C2390 330 2380 250 2365 39",
  "M1150 385C1220 430 1290 425 1400 430L1640 445C1800 465 1900 500 2030 535L2380 620C2500 640 2620 690 2710 755L2811 850",
  "M940 39L990 115 1085 215",
  "M575 39L650 105 750 215M650 120C720 160 690 90 740 90C790 95 815 150 812 215",
];

const RAMPS = [
  "M600 39L680 120C690 150 640 180 610 170C590 150 620 130 650 150M700 180L660 150M960 400C1000 470 1060 520 1150 480C1200 460 1240 430 1300 428M940 430C960 500 1080 520 1160 440",
  "M1880 360C1940 380 1930 430 1950 470M1900 370C1930 400 1940 440 1930 480M1240 430C1180 400 1160 380 1150 378M1560 540C1590 500 1600 470 1610 450",
];

type Label = [x: number, y: number, text: string, kind: string, rotate?: number];

const KINDS: Record<string, { size: number; fill: string; weight?: number; italic?: boolean; anchor?: "start" | "middle" }> = {
  area: { size: 36, fill: "#8a7e74", weight: 500, anchor: "middle" },
  cjk: { size: 33, fill: "#8a7e74", anchor: "middle" },
  road: { size: 30, fill: "#777" },
  hwy: { size: 36, fill: "#7a4a1e" },
  park: { size: 39, fill: "#4e8244", italic: true, anchor: "middle" },
  parkc: { size: 33, fill: "#4e8244", anchor: "middle" },
  club: { size: 39, fill: "#4e8244", anchor: "middle" },
  poi: { size: 39, fill: "#3e3e3e", anchor: "middle" },
  poic: { size: 33, fill: "#3e3e3e", anchor: "middle" },
  poii: { size: 36, fill: "#3e3e3e", italic: true },
  blue: { size: 30, fill: "#3c92bd" },
};

const LABELS: Label[] = [
  [2044, 105, "ZHUGUANGCUN", "area"], [2044, 141, "珠光村", "cjk"],
  [2214, 196, "XINWUCUN", "area"], [2214, 232, "新屋村", "cjk"],
  [1808, 448, "XILI", "area"], [1808, 487, "西丽", "cjk"],
  [2522, 514, "LONGJING", "area"], [2522, 546, "龙井", "cjk"],
  [600, 261, "TONG", "area"], [628, 294, "同", "cjk"],
  [92, 424, "NGMING", "area"], [96, 460, "DENTIAL", "area"], [84, 497, "TRICT", "area"], [56, 530, "光明", "cjk"],
  [1847, 1139, "RUANWU", "area"], [1849, 1165, "阮屋", "cjk"],
  [576, 1261, "NANTOU", "area"], [574, 1299, "南头", "cjk"],
  [454, 1381, "XILI RESIDENTIAL", "area"], [454, 1418, "DISTRICT", "area"], [452, 1453, "西丽", "cjk"],
  [640, 1543, "XINGWEI", "area"], [638, 1578, "兴围", "cjk"],
  [940, 1559, "NANSHAN", "area"], [940, 1592, "南山区", "cjk"],
  [454, 1672, "JIEBIAN", "area"], [454, 1704, "界边", "cjk"],
  [608, 1828, "NANSHAN", "area"], [608, 1864, "RESIDENTIAL", "area"], [608, 1900, "DISTRICT", "area"],
  [1041, 1815, "GUIMIAO", "area"], [1041, 1851, "桂庙", "cjk"],
  [2654, 1389, "SHAHE", "area"], [2654, 1426, "RESIDENTIAL", "area"], [2654, 1462, "DISTRICT", "area"], [2654, 1496, "沙河", "cjk"],
  [527, 982, "Zhongshan", "park"], [527, 1030, "Park", "park"], [527, 1065, "中山公园", "parkc"],
  [2037, 634, "Dashahe Park", "park"], [2037, 669, "大沙河公园", "parkc"],
  [2026, 1354, "Shahe Golf Club", "club"],
  [2600, 1286, "Happy Valley", "poi"], [2662, 1319, "欢乐谷", "poic"],
  [2332, 1494, "the World", "poi"], [2318, 1529, "深圳世界之窗", "poic"],
  [48, 1597, "Baishipai", "poii"], [126, 1631, "白石牌", "poic"],
  [130, 1898, "Weishipai", "poii"], [32, 1747, "圳西", "blue"],
  [2700, 1712, "华中华", "poic"], [2670, 1768, "Baguan", "poii"],
  [215, 155, "yuan Rd", "road", 47], [135, 335, "Qianjin 1st Rd", "road", 48],
  [440, 592, "Tong'an Rd", "road", 24], [452, 686, "Qianjin Rd", "road", 3],
  [1175, 541, "Meng Xi Lu", "road"], [1228, 619, "Jiuzhang Rd", "road"], [1264, 669, "Langshan Rd", "road"],
  [1068, 755, "Nanhai Ave", "road", -88], [1555, 42, "u Rd", "road", 90],
  [1898, 292, "Longjing Rd", "road", 58], [1890, 590, "Shahe W Rd", "road", 88],
  [1455, 868, "Keyuan Rd", "road", 88], [1496, 934, "Kefeng Rd", "road"],
  [2216, 945, "Xiangshan W St", "road", -4], [2622, 868, "Qiaoxiang Rd", "road", 41],
  [145, 1030, "kou 2nd Rd", "road", -36], [95, 1075, "Guankou", "road", -38],
  [318, 985, "Shennan Ave", "road", 65], [188, 1245, "Bao'an Ave", "road"],
  [30, 1380, "No 6 Rd", "road", 90], [890, 1065, "Quan", "road", 90],
  [527, 1757, "Xuefu Rd", "road", 4], [912, 1780, "Nanhai Ave", "road", -68],
  [1255, 1855, "Keyuan Rd", "road", -50], [1336, 1612, "Baishi Rd", "road", -12],
  [1672, 1582, "Baishi Rd", "road"], [1605, 1210, "Keji Rd", "road", 86],
  [2174, 1135, "Shahe E Rd", "road", -84], [2122, 1850, "Shahe E Rd", "road", -86],
  [1790, 1908, "he W Rd", "road", -86], [2358, 1869, "Baishi 3rd Rd", "road"],
  [785, 832, "Beihuan Ave", "hwy", 2], [1560, 846, "Beihuan Ave", "hwy", -9], [2096, 792, "Beihuan Ave", "hwy", -7],
  [2182, 536, "Nan", "hwy", -16], [2242, 518, "ping", "hwy", -32], [2304, 476, "Expy", "hwy", -50],
  [2410, 628, "G4 Jinggang'ao", "hwy", 22], [2640, 726, "Expy (Toll road)", "hwy", 38], [2786, 752, "Bei", "hwy", -10],
];

const METRO: [number, number][] = [
  [401, 1593], [740, 1588], [1425, 1345], [1765, 1290], [2222, 1313], [2481, 1419], [1500, 1790], [2273, 1868],
];

const SHIELDS: [number, number, number, string, string][] = [
  [936, 62, 60, "S33", "#4a8a45"],
  [255, 842, 84, "G107", "#cf5560"],
  [1692, 457, 48, "G4", "#4a8a45"],
];

function Marker({ x, y, side, color = "#2f3336" }: { x: number; y: number; side?: boolean; color?: string }) {
  return (
    <g transform={`translate(${x} ${y})`} fill="none" stroke={color} strokeWidth="5">
      {side ? (
        <>
          <rect x="12" y="2" width="36" height="84" rx="7" fill="#fff" fillOpacity=".85" />
          <path d="M18 6v76M28 17h14" />
          <path d="M12 4H3v15h9M12 33H4v30h8" />
        </>
      ) : (
        <>
          <rect x="6" y="9" width="38" height="78" rx="8" fill="#fff" fillOpacity=".3" />
          <path d="M13 7V3h24v4M17 25h16" />
        </>
      )}
    </g>
  );
}

function CityMap() {
  return (
    <svg viewBox="30 39 2781 1872" preserveAspectRatio="xMidYMid slice" role="img" aria-label="Map of device locations">
      <rect x="0" y="0" width="2850" height="1950" fill="#edeae4" />
      <g fill="#f2e2cf">{BUILT.map((d) => <path key={d} d={d} />)}</g>
      <g fill="#c6dfa3">{PARKS.map((d) => <path key={d} d={d} />)}</g>
      <g fill="#94bbee">{WATER.map((d) => <path key={d} d={d} />)}</g>
      <ellipse cx="1056" cy="1652" rx="46" ry="20" transform="rotate(-14 1056 1652)" fill="#94bbee" />
      <ellipse cx="973" cy="1700" rx="36" ry="18" transform="rotate(-48 973 1700)" fill="#94bbee" />
      <g fill="none" stroke="#fff" strokeWidth="4" strokeOpacity=".85" strokeLinejoin="round">
        {MINOR.map((d) => <path key={d} d={d} />)}
      </g>
      <g fill="none" stroke="#94bbee" strokeLinejoin="round">
        <path d="M1800 39L1805 140 1825 230 1880 340 1912 420 1920 540 1918 770 1925 850 1960 890C2010 950 2015 1080 1975 1180L1965 1320" strokeWidth="18" />
        <path d="M1880 1500L1830 1600 1812 1760 1808 1911" strokeWidth="24" />
        <path d="M245 785L382 684M30 745L92 690" strokeWidth="11" />
        <path d="M1940 540L2030 545 2120 572 2180 550 2260 555 2310 585 2520 635M1960 848H2145V920" strokeWidth="6" />
        <path d="M1950 1660C1990 1640 2040 1660 2080 1700C2090 1760 2060 1800 2070 1860M1860 1710L1930 1690M1900 1780C1880 1830 1900 1860 1920 1880" strokeWidth="11" />
        <path d="M100 1520V1860M295 200L275 350" strokeWidth="4" />
      </g>
      <circle cx="2030" cy="1668" r="27" fill="#e8e6dc" stroke="#94bbee" strokeWidth="5" />
      <g fill="none" stroke="#fff" strokeWidth="14" strokeLinejoin="round" strokeLinecap="round">
        {MAJOR.map((d) => <path key={d} d={d} />)}
      </g>
      <g fill="none" stroke="#d9d5cd" strokeWidth="3">
        {[[1025, 808], [1070, 808], [1025, 862], [1070, 862], [1905, 770], [1950, 770], [1910, 820], [2195, 800], [2235, 760], [175, 1210], [215, 1260], [180, 1260], [1912, 1260], [1912, 1300]].map(([x, y]) => (
          <circle key={`${x}-${y}`} cx={x} cy={y} r="17" fill="#f3f1ec" />
        ))}
        <path d="M975 840L1050 765 1125 835 1050 910ZM110 1160C150 1280 190 1300 210 1330C230 1300 240 1270 290 1250" />
      </g>
      <g fill="none" stroke="#c9c6c2" strokeWidth="3">
        <path d="M900 378C780 460 690 540 600 640L390 880 300 960 30 1110M1935 340C2060 340 2140 200 2230 60M1240 350H1340" />
      </g>
      <path d="M30 205L190 39" stroke="#5a4a4a" strokeWidth="7" />
      <path
        d="M30 600L100 665 220 790C190 850 220 900 300 925M220 790C300 830 300 880 295 950"
        fill="none"
        stroke="#f5dc7c"
        strokeWidth="17"
        strokeLinejoin="round"
      />
      <g fill="none" stroke="#fbd9a6" strokeWidth="7">{RAMPS.map((d) => <path key={d} d={d} />)}</g>
      <g fill="none" stroke="#dd9a45" strokeLinecap="round">{HIGHWAYS.map((d, i) => <path key={d} d={d} strokeWidth={i > 2 ? 15 : 23} />)}</g>
      <g fill="none" stroke="#fcca81" strokeLinecap="round">{HIGHWAYS.map((d, i) => <path key={d} d={d} strokeWidth={i > 2 ? 10 : 18} />)}</g>
      <path d="M1440 445C1640 445 1760 460 1880 470L2020 500M2365 39C2380 250 2390 330 2365 395" fill="none" stroke="#e3a352" strokeWidth="3" />
      <g fill="none" strokeWidth="5">
        <path d="M30 1602L160 1598 401 1593 590 1584 740 1586 1020 1582 1180 1515 1330 1460 1425 1345 1455 1302 1765 1290 1940 1283H2135L2222 1313 2481 1419 2720 1535C2760 1545 2790 1541 2811 1543" stroke="#3d9c78" strokeWidth="6" />
        <path d="M2811 1038C2720 1020 2650 1035 2600 1100C2560 1180 2520 1310 2481 1419C2465 1460 2466 1480 2466 1520L2465 1800C2460 1850 2420 1868 2360 1868H2090C1990 1860 1950 1780 1820 1783L1445 1793C1410 1810 1400 1860 1375 1911" stroke="#e0923a" />
      </g>
      <path d="M1665 39V43H1747V39" fill="none" stroke="#555" strokeWidth="4" />
      {METRO.map(([x, y]) => (
        <g key={`${x}-${y}`}>
          <rect x={x - 12} y={y - 12} width="24" height="24" fill="#2f9fcb" />
          <path d={`M${x - 6} ${y + 6}v-11l6 7 6-7v11`} fill="none" stroke="#fff" strokeWidth="3" />
        </g>
      ))}
      <rect x="103" y="1720" width="31" height="32" rx="4" fill="#3aa0c9" />
      <path d="M111 1727h15v14h-15zM112 1746l-3 4M125 1746l3 4" fill="none" stroke="#fff" strokeWidth="3" />
      <g fill="#fff" stroke="#b9aea4" strokeWidth="3">
        <circle cx="2738" cy="1288" r="18" />
        <circle cx="2443" cy="1498" r="18" />
        <circle cx="1909" cy="1865" r="18" stroke="#d8e8c4" />
      </g>
      <g fill="none" stroke="#887a6e" strokeWidth="4">
        <path d="M2728 1290a10 10 0 1 1 20 0l-6 8h-8zM2433 1500a10 10 0 1 1 20 0l-6 8h-8z" />
        <path d="M1901 1856h14l-10 10 10 10M1904 1868l-3 8" stroke="#7ba35b" />
        <path d="M628 1190h20v12h-20zM630 1183v6" stroke="#6c635c" />
      </g>
      {SHIELDS.map(([x, y, w, text, fill]) => (
        <g key={text}>
          <rect x={x} y={y} width={w} height={text === "G4" ? 44 : 38} fill={fill} />
          {text !== "G107" && <rect x={x} y={y} width={w} height="8" fill="#c47a50" />}
          <text x={x + w / 2} y={y + (text === "G4" ? 35 : 30)} fontSize="27" fontWeight="700" fill="#fff" textAnchor="middle">
            {text}
          </text>
        </g>
      ))}
      <g fontFamily='Roboto, "Noto Sans CJK SC", sans-serif' stroke="#fff" strokeOpacity=".6" strokeWidth="5" strokeLinejoin="round" paintOrder="stroke">
        {LABELS.map(([x, y, text, kind, rotate]) => {
          const k = KINDS[kind];
          return (
            <text
              key={`${x}-${y}`}
              x={x}
              y={y}
              fontSize={k.size}
              fill={k.fill}
              fontWeight={k.weight ?? 400}
              fontStyle={k.italic ? "italic" : "normal"}
              textAnchor={k.anchor ?? "start"}
              transform={rotate ? `rotate(${rotate} ${x} ${y})` : undefined}
            >
              {text}
            </text>
          );
        })}
      </g>
      <text x="48" y="1887" fontFamily="Lato, sans-serif" fontSize="60" fontWeight="700" stroke="#fff" strokeWidth="4" paintOrder="stroke">
        <tspan fill="#4a7fe0">G</tspan>
        <tspan fill="#d9483b">o</tspan>
        <tspan fill="#eab52e">o</tspan>
        <tspan fill="#4a7fe0">g</tspan>
        <tspan fill="#3f9d58">l</tspan>
        <tspan fill="#d9483b">e</tspan>
      </text>
      <path d="M925 540L1421 1115M1626 540L1421 1115" stroke="#9b9b9b" strokeWidth="15" />
      <path d="M1421 1115L925 1680M1421 1115L1272 1680M1421 1115L1970 1660" stroke="#8cc540" strokeWidth="15" />
      <g fill="#fff" stroke="#49a9b9" strokeWidth="5">
        <path d="M1394 1046h56v56h-56z" fill="#7cc3cd" />
        <path d="M1398 1056h40M1398 1068h36M1398 1080h30M1404 1092h28M1408 1050v20M1422 1050v50M1436 1050v30" stroke="#fff" strokeWidth="4" />
      </g>
      <Marker x={898} y={449} side />
      <Marker x={1602} y={451} />
      <Marker x={898} y={1588} side color="#5fbcc6" />
      <Marker x={1247} y={1588} />
      <Marker x={1948} y={1586} side />
    </svg>
  );
}

interface BubbleData {
  x: number;
  y: number;
  w: number;
  tip: number;
  rows: [string, string][];
}

const BUBBLES: BubbleData[] = [
  { x: 202, y: 58, w: 193, tip: 97, rows: [["Device name:", "CPE210-1"], ["Mode:", "0"]] },
  { x: 441, y: 58, w: 182, tip: 91, rows: [["Device name:", "CPE510"], ["Mode:", "0"]] },
  {
    x: 207, y: 362, w: 182, tip: 90,
    rows: [["Device name:", "CPE210"], ["Mode:", "0"], ["IP:", "192.168.1.122"], ["Signal:", "-1"], ["Rx rate:", "5"], ["Tx rate:", "4"]],
  },
  { x: 318, y: 437, w: 194, tip: 96, rows: [["Device name:", "CPE510-2"], ["Mode:", "0"]] },
  { x: 557, y: 437, w: 183, tip: 92, rows: [["Device name:", "CBS779"], ["Mode:", "0"]] },
];

function DeviceMap() {
  return (
    <MapFrame>
      <CityMap />
      {BUBBLES.map((b) => (
        <Bubble key={b.x} $x={b.x} $y={b.y} $w={b.w} $tip={b.tip}>
          <dl>
            {b.rows.map(([k, v]) => (
              <div key={k}>
                <dt>{k}</dt>
                <dd>{v}</dd>
              </div>
            ))}
          </dl>
          <CloseButton type="button" aria-label="Close">
            <svg width="10" height="10" viewBox="0 0 10 10" stroke="#8f8f8f" strokeWidth="1.800">
              <path d="m.800.800 8.400 8.400M9.200.800.800 9.200" />
            </svg>
          </CloseButton>
        </Bubble>
      ))}
      <MapTypes>
        <button type="button">Map</button>
        <button type="button">Satellite</button>
      </MapTypes>
      <Pegman aria-label="Street view">
        <svg width="12" height="20" viewBox="0 0 12 20" fill="#f0a92c" stroke="#c9821d" strokeWidth=".6">
          <circle cx="6" cy="3" r="2.600" />
          <path d="M2.500 6h7l2 5.500-1.500.800-1-2.300-.5 9.500h-2L6 14l-.5 5.500h-2L3 10l-1 2.300-1.500-.800z" />
        </svg>
      </Pegman>
      <ZoomControl>
        <button type="button" aria-label="Zoom in">
          <svg width="10" height="10" viewBox="0 0 10 10" stroke="#555" strokeWidth="2.400">
            <path d="M5 0v10M0 5h10" />
          </svg>
        </button>
        <button type="button" aria-label="Zoom out">
          <svg width="10" height="10" viewBox="0 0 10 10" stroke="#555" strokeWidth="3">
            <path d="M0 5h10" />
          </svg>
        </button>
      </ZoomControl>
      <Attribution>
        <span>Map data ©2016 Google</span>
        <a href="#terms">Terms of Use</a>
        <a href="#report">Report a map error</a>
      </Attribution>
    </MapFrame>
  );
}

/* ---------- app ---------- */

const COPYRIGHT = "Copyright © 2016 TP-Link Technologies Co., Ltd.";

export default function App() {
  return (
    <>
      <GlobalStyle />
      <Page>
        <Screen>
          <ScreenTop max={1207} head={109} nav={49} />
          <Body $max={1207} $gap={29} $right={20} $bottom={19}>
            <Groups />
            <div>
              <Toolbar $right={5} $gap={14}>
                <Tools names={["Scan", "Add"]} />
                <ToolEnd>
                  <ViewSwitch view="list" />
                </ToolEnd>
              </Toolbar>
              <DeviceList />
              <Status $top={25}>
                <span>The total number: <b>5</b></span>
                <span>Select the number: <b>[]</b></span>
              </Status>
            </div>
          </Body>
          <Footer>{COPYRIGHT}</Footer>
        </Screen>

        <Screen $inset={7}>
          <ScreenTop max={1202} head={110} nav={48} />
          <Body $max={1202} $gap={28} $right={25} $bottom={38}>
            <Groups muted="Managed(3)" />
            <div>
              <Toolbar $gap={19}>
                <Tools names={["Scan", "Add"]} />
                <Tools names={["Remove", "Edit", "Upgrade", "Reboot", "Monitor", "Locate"]} />
                <Tools names={["More"]} />
                <ToolEnd>
                  <LockLabel>
                    <Check />
                    Lock on Map
                  </LockLabel>
                  <ViewSwitch view="map" />
                </ToolEnd>
              </Toolbar>
              <DeviceMap />
              <Status $top={29}>
                <span>The total number: <b>5</b></span>
                <span>Select the number: <b>[0]</b></span>
              </Status>
            </div>
          </Body>
          <Footer>{COPYRIGHT}</Footer>
        </Screen>
      </Page>
    </>
  );
}
